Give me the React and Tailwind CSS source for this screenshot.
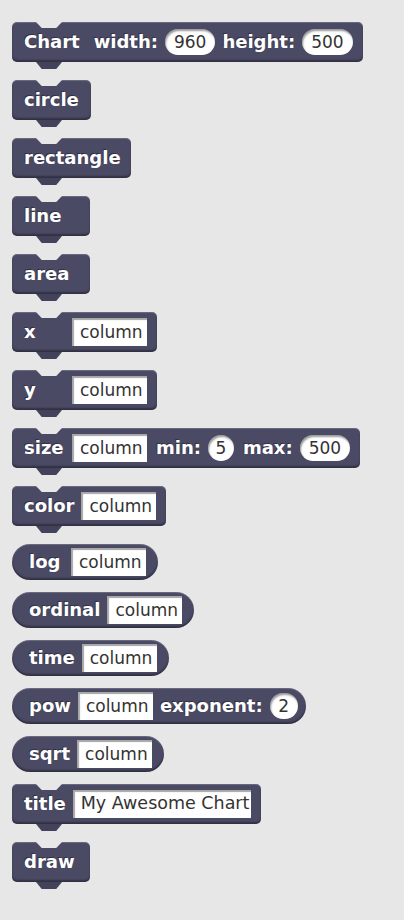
import React from 'react';

const BG = 'bg-[#e6e7e6]';

function Label({ children, className = '' }) {
  return (
    <span className={`text-[18px] font-bold leading-none text-white [text-shadow:-1px_-1px_0_rgba(0,0,0,0.35)] ${className}`}>
      {children}
    </span>
  );
}

function Slot({ children, className = 'w-[75px] text-[17px]' }) {
  return (
    <div className={`flex h-7 items-center bg-white pl-2 leading-none text-[#333] shadow-[inset_2px_2px_1px_rgba(0,0,0,0.35)] ${className}`}>
      {children}
    </div>
  );
}

function Pill({ children, className = '' }) {
  return (
    <div className={`flex h-[26px] items-center justify-center rounded-full bg-white px-[9px] text-[17px] leading-none text-[#333] shadow-[inset_1px_2px_2px_rgba(0,0,0,0.4)] ${className}`}>
      {children}
    </div>
  );
}

function Command({ children, className = '' }) {
  return (
    <div className={`relative mb-[18px] flex h-10 min-w-[78px] items-center gap-[7px] rounded-[5px] bg-[#4b4a65] pl-3 pr-[10px] shadow-[inset_0_1px_1px_rgba(255,255,255,0.18),inset_0_-2px_2px_rgba(0,0,0,0.35)] ${className}`}>
      <div className={`absolute left-[24px] top-0 h-[6px] w-[26px] ${BG} [clip-path:polygon(0_0,100%_0,78%_100%,22%_100%)]`} />
      {children}
      <div className="absolute left-[24px] top-full h-[7px] w-[26px] bg-[#43425b] [clip-path:polygon(0_0,100%_0,78%_100%,22%_100%)]" />
    </div>
  );
}

function Reporter({ children, pad = 'pr-3' }) {
  return (
    <div className={`mb-3 flex h-9 items-center gap-[7px] rounded-full bg-[#4b4a65] pl-[17px] shadow-[inset_0_1px_1px_rgba(255,255,255,0.18),inset_0_-2px_2px_rgba(0,0,0,0.35)] ${pad}`}>
      {children}
    </div>
  );
}

export default function App() {
  return (
    <div className={`min-h-[920px] w-full ${BG} font-['DejaVu_Sans',sans-serif]`}>
      <div className="flex flex-col items-start pl-3 pt-[22px]">
        <Command>
          <Label>Chart</Label>
          <Label className="ml-[7px]">width:</Label>
          <Pill>960</Pill>
          <Label>height:</Label>
          <Pill>500</Pill>
        </Command>
        <Command className="pr-[12px]"><Label>circle</Label></Command>
        <Command><Label>rectangle</Label></Command>
        <Command><Label>line</Label></Command>
        <Command><Label>area</Label></Command>
        <Command>
          <Label className="min-w-[41px]">x</Label>
          <Slot>column</Slot>
        </Command>
        <Command>
          <Label className="min-w-[41px]">y</Label>
          <Slot>column</Slot>
        </Command>
        <Command>
          <Label className="min-w-[41px]">size</Label>
          <Slot>column</Slot>
          <Label className="ml-[2px]">min:</Label>
          <Pill className="w-[26px] px-0">5</Pill>
          <Label className="ml-[2px]">max:</Label>
          <Pill>500</Pill>
        </Command>
        <Command>
          <Label className="min-w-[41px]">color</Label>
          <Slot>column</Slot>
        </Command>

        <Reporter>
          <Label className="min-w-[35px]">log</Label>
          <Slot>column</Slot>
        </Reporter>
        <Reporter>
          <Label>ordinal</Label>
          <Slot>column</Slot>
        </Reporter>
        <Reporter>
          <Label>time</Label>
          <Slot>column</Slot>
        </Reporter>
        <Reporter pad="pr-[8px]">
          <Label>pow</Label>
          <Slot>column</Slot>
          <Label>exponent:</Label>
          <Pill className="w-[28px] px-0">2</Pill>
        </Reporter>
        <Reporter>
          <Label>sqrt</Label>
          <Slot>column</Slot>
        </Reporter>

        <Command className="pr-[8px]">
          <Label className="min-w-[41px]">title</Label>
          <Slot className="w-[178px] text-[17.5px]">My Awesome Chart</Slot>
        </Command>
        <Command><Label>draw</Label></Command>
      </div>
    </div>
  );
}
